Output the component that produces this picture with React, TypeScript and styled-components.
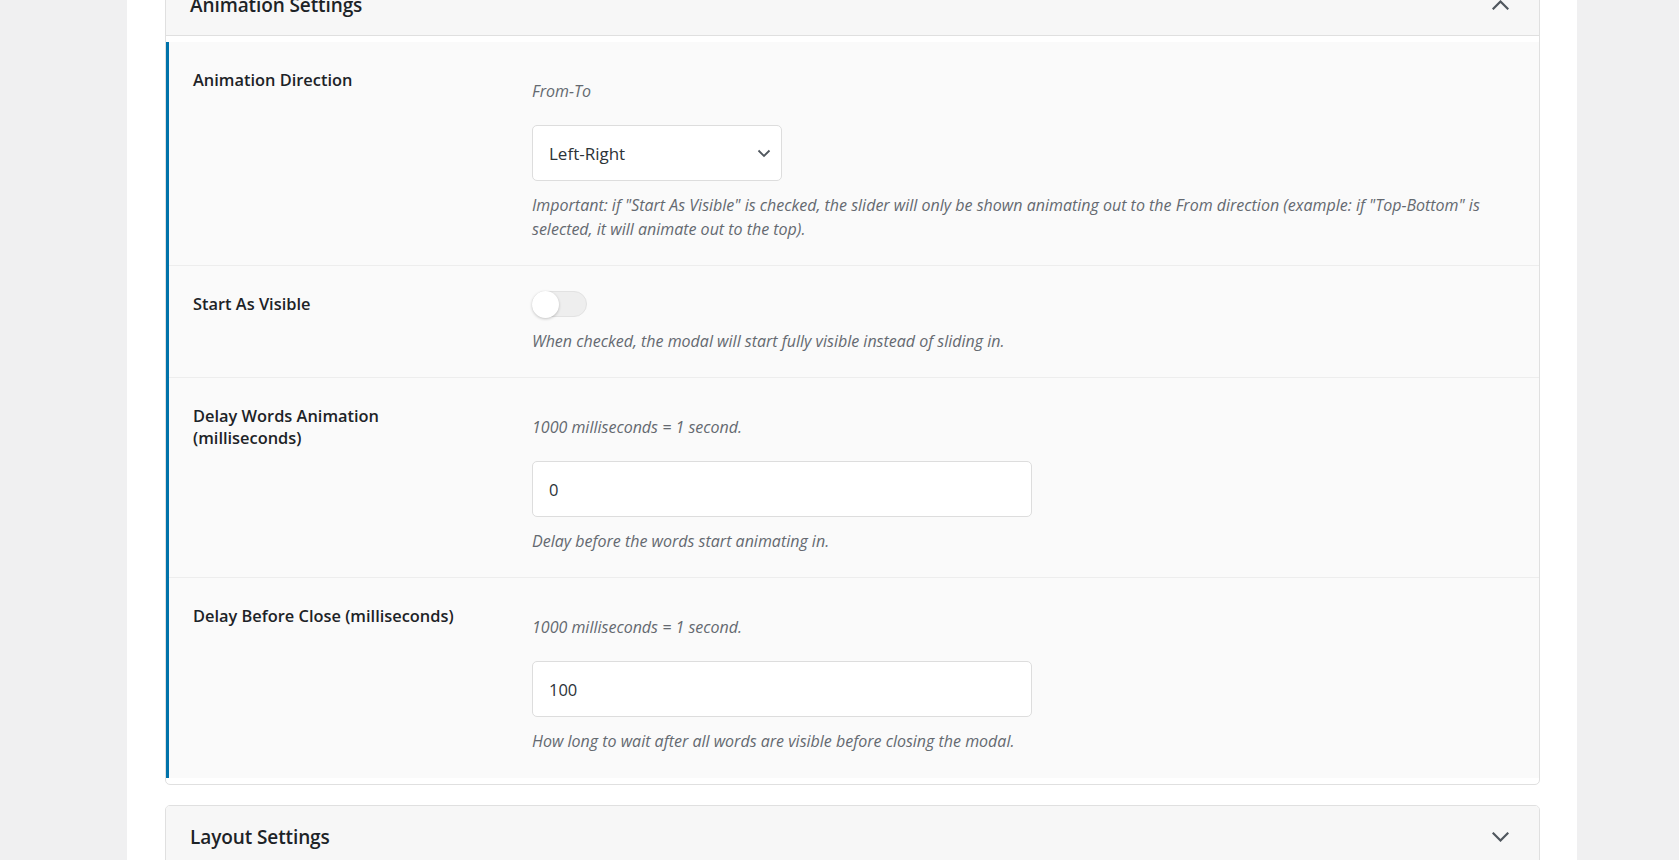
import React from "react";
import styled, { createGlobalStyle } from "styled-components";

const GlobalStyle = createGlobalStyle`
  html, body {
    margin: 0;
    padding: 0;
    background: #f0f0f1;
    font-family: "Open Sans", "Noto Sans", Arial, sans-serif;
    color: #1d2327;
    overflow: hidden;
  }
  * { box-sizing: border-box; }
`;

const Viewport = styled.div`
  height: 860px;
  overflow: hidden;
`;

const Page = styled.div`
  margin-left: 127px;
  width: 1450px;
  min-height: 900px;
  background: #ffffff;
  padding: 0 37px 0 38px;
  margin-top: -27px;
  display: flex;
  flex-direction: column;
  gap: 20px;
`;

const Card = styled.section`
  border: 1px solid #e0e0e0;
  border-radius: 5px;
  background: #ffffff;
  overflow: hidden;
`;

const CardHeader = styled.div<{ $open?: boolean }>`
  height: 62px;
  display: flex;
  align-items: center;
  justify-content: space-between;
  padding: 0 30px 0 24px;
  background: #f7f7f7;
  border-bottom: ${(p) => (p.$open ? "1px solid #e0e0e0" : "none")};
`;

const CardTitle = styled.h2`
  margin: 0;
  font-size: 19px;
  font-weight: 600;
  color: #1d2327;
  letter-spacing: -0.1px;
`;

const CardBody = styled.div`
  padding: 6px 0;
`;

const Section = styled.div`
  background: #fafafa;
  border-left: 3px solid #0073aa;
`;

const Row = styled.div`
  display: grid;
  grid-template-columns: 339px 1fr;
  padding: 25px 24px 24px 24px;
  border-bottom: 1px solid #ededed;
  &:last-child {
    border-bottom: none;
    padding-bottom: 25px;
  }
`;

const Label = styled.div`
  font-size: 16.4px;
  font-weight: 600;
  line-height: 21.5px;
  color: #1d2327;
  max-width: 285px;
  padding-top: 2px;
`;

const Field = styled.div`
  display: flex;
  flex-direction: column;
  align-items: flex-start;
`;

const Note = styled.p<{ $top?: boolean }>`
  margin: ${(p) => (p.$top ? "12px 0 22px" : "12px 0 0")};
  font-size: 16px;
  font-style: italic;
  line-height: 24px;
  color: #646970;
`;

const SelectBox = styled.div`
  width: 250px;
  height: 56px;
  border: 1px solid #dddddd;
  border-radius: 5px;
  background: #ffffff;
  display: flex;
  align-items: center;
  justify-content: space-between;
  padding: 0 10px 0 16px;
  font-size: 17px;
  color: #2c3338;
`;

const TextInput = styled.div`
  width: 500px;
  height: 56px;
  border: 1px solid #dddddd;
  border-radius: 5px;
  background: #ffffff;
  display: flex;
  align-items: center;
  padding: 0 16px;
  font-size: 16.5px;
  color: #2c3338;
`;

const Toggle = styled.div`
  position: relative;
  width: 55px;
  height: 26px;
  border-radius: 13px;
  background: #eeeeee;
  border: 1px solid #e2e2e2;
`;

const Knob = styled.span`
  position: absolute;
  left: -1px;
  top: -1px;
  width: 27px;
  height: 27px;
  border-radius: 50%;
  background: #ffffff;
  box-shadow: 0 1px 3px rgba(0, 0, 0, 0.22);
`;

const Chevron = ({ up, size = 17 }: { up?: boolean; size?: number }) => (
  <svg width={size} height={Math.round(size * 0.6)} viewBox="0 0 17 10" fill="none">
    <path
      d={up ? "M1.5 8.5 L8.5 1.5 L15.5 8.5" : "M1.5 1.5 L8.5 8.5 L15.5 1.5"}
      stroke="#50575e"
      strokeWidth="2.2"
      strokeLinecap="square"
    />
  </svg>
);

const SmallChevron = () => (
  <svg width="14" height="9" viewBox="0 0 14 9" fill="none">
    <path d="M1.5 1.5 L7 7 L12.5 1.5" stroke="#50575e" strokeWidth="1.8" />
  </svg>
);

export default function App() {
  return (
    <>
      <GlobalStyle />
      <Viewport>
        <Page>
          <Card>
            <CardHeader $open>
              <CardTitle>Animation Settings</CardTitle>
              <Chevron up />
            </CardHeader>
            <CardBody>
              <Section>
                <Row>
                  <Label>Animation Direction</Label>
                  <Field>
                    <Note $top>From-To</Note>
                    <SelectBox>
                      <span>Left-Right</span>
                      <SmallChevron />
                    </SelectBox>
                    <Note>
                      Important: if "Start As Visible" is checked, the slider will only be shown
                      animating out to the From direction (example: if "Top-Bottom" is selected, it
                      will animate out to the top).
                    </Note>
                  </Field>
                </Row>
                <Row>
                  <Label>Start As Visible</Label>
                  <Field>
                    <Toggle>
                      <Knob />
                    </Toggle>
                    <Note>When checked, the modal will start fully visible instead of sliding in.</Note>
                  </Field>
                </Row>
                <Row>
                  <Label>Delay Words Animation (milliseconds)</Label>
                  <Field>
                    <Note $top>1000 milliseconds = 1 second.</Note>
                    <TextInput>0</TextInput>
                    <Note>Delay before the words start animating in.</Note>
                  </Field>
                </Row>
                <Row>
                  <Label>Delay Before Close (milliseconds)</Label>
                  <Field>
                    <Note $top>1000 milliseconds = 1 second.</Note>
                    <TextInput>100</TextInput>
                    <Note>How long to wait after all words are visible before closing the modal.</Note>
                  </Field>
                </Row>
              </Section>
            </CardBody>
          </Card>
          <Card>
            <CardHeader>
              <CardTitle>Layout Settings</CardTitle>
              <Chevron />
            </CardHeader>
          </Card>
        </Page>
      </Viewport>
    </>
  );
}
